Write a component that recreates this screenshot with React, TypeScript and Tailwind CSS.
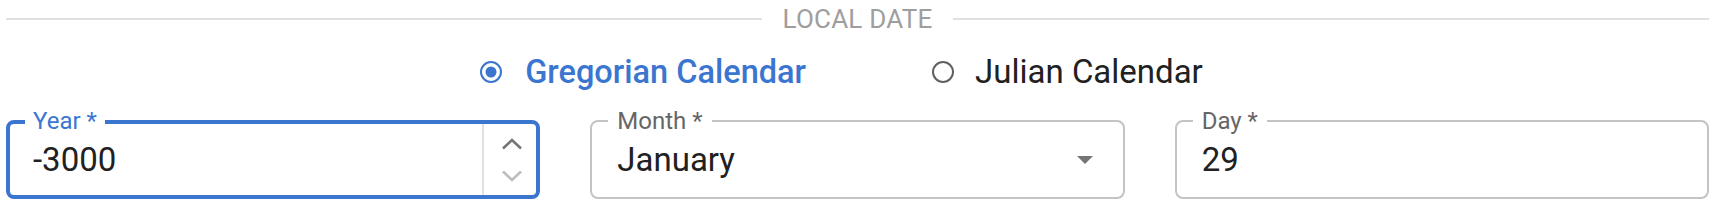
import React from "react";

const font = { fontFamily: "Roboto, 'Noto Sans', Arial, sans-serif" };

function RadioIcon({ checked }: { checked: boolean }) {
  const color = checked ? "#3a76d0" : "#616161";
  return (
    <svg width="22" height="22" viewBox="0 0 22 22" className="shrink-0">
      <circle cx="11" cy="11" r="10" fill="none" stroke={color} strokeWidth="2" />
      {checked && <circle cx="11" cy="11" r="5.5" fill={color} />}
    </svg>
  );
}

function Chevron({ up, color }: { up: boolean; color: string }) {
  return (
    <svg width="22" height="12" viewBox="0 0 22 12">
      <polyline
        points={up ? "2,10.5 11,2 20,10.5" : "2,1.5 11,10 20,1.5"}
        fill="none"
        stroke={color}
        strokeWidth="2.6"
      />
    </svg>
  );
}

export default function App() {
  return (
    <div className="bg-white w-[1715px] h-[204px] px-[6px] text-[#212121]" style={font}>
      {/* Divider */}
      <div className="flex items-center h-[38px]">
        <div className="flex-1 h-[2px] bg-[#e0e0e0]" />
        <span className="px-[21px] text-[26px] leading-[30px] text-[#9e9e9e] tracking-[0.2px]">
          LOCAL DATE
        </span>
        <div className="flex-1 h-[2px] bg-[#e0e0e0]" />
      </div>

      {/* Calendar radios */}
      <div className="flex justify-center items-center h-[44px] mt-[12px] pr-[32px]">
        <label className="flex items-center gap-[23px]">
          <RadioIcon checked />
          <span className="text-[32.5px] leading-[40px] font-medium text-[#3a76d0]">
            Gregorian Calendar
          </span>
        </label>
        <label className="flex items-center gap-[21px] ml-[126px]">
          <RadioIcon checked={false} />
          <span className="text-[33px] leading-[40px]">Julian Calendar</span>
        </label>
      </div>

      {/* Fields */}
      <div className="grid grid-cols-3 gap-[50px] mt-[26px]">
        <div className="relative h-[79px] rounded-[8px] border-[4px] border-[#3a76d0] flex">
          <span className="absolute left-[15px] top-[-17px] px-[8px] bg-white text-[24px] leading-[28px] text-[#3a76d0]">
            Year *
          </span>
          <div className="flex-1 flex items-center pl-[23px] text-[33px]">-3000</div>
          <div className="w-[54px] border-l-[2px] border-[#e0e0e0] flex flex-col items-center justify-center gap-[20px] pl-[4px]">
            <Chevron up color="#757575" />
            <Chevron up={false} color="#bdbdbd" />
          </div>
        </div>

        <div className="relative h-[79px] rounded-[8px] border-[2px] border-[#c4c4c4] flex items-center">
          <span className="absolute left-[16px] top-[-15px] px-[9px] bg-white text-[24px] leading-[28px] text-[#666666]">
            Month *
          </span>
          <div className="flex-1 pl-[25px] text-[33px]">January</div>
          <svg width="16" height="8" viewBox="0 0 16 8" className="mr-[30px]">
            <path d="M0 0 L8 8 L16 0 Z" fill="#757575" />
          </svg>
        </div>

        <div className="relative h-[79px] rounded-[8px] border-[2px] border-[#c4c4c4] flex items-center">
          <span className="absolute left-[16px] top-[-15px] px-[9px] bg-white text-[24px] leading-[28px] text-[#666666]">
            Day *
          </span>
          <div className="flex-1 pl-[25px] text-[33px]">29</div>
        </div>
      </div>
    </div>
  );
}
